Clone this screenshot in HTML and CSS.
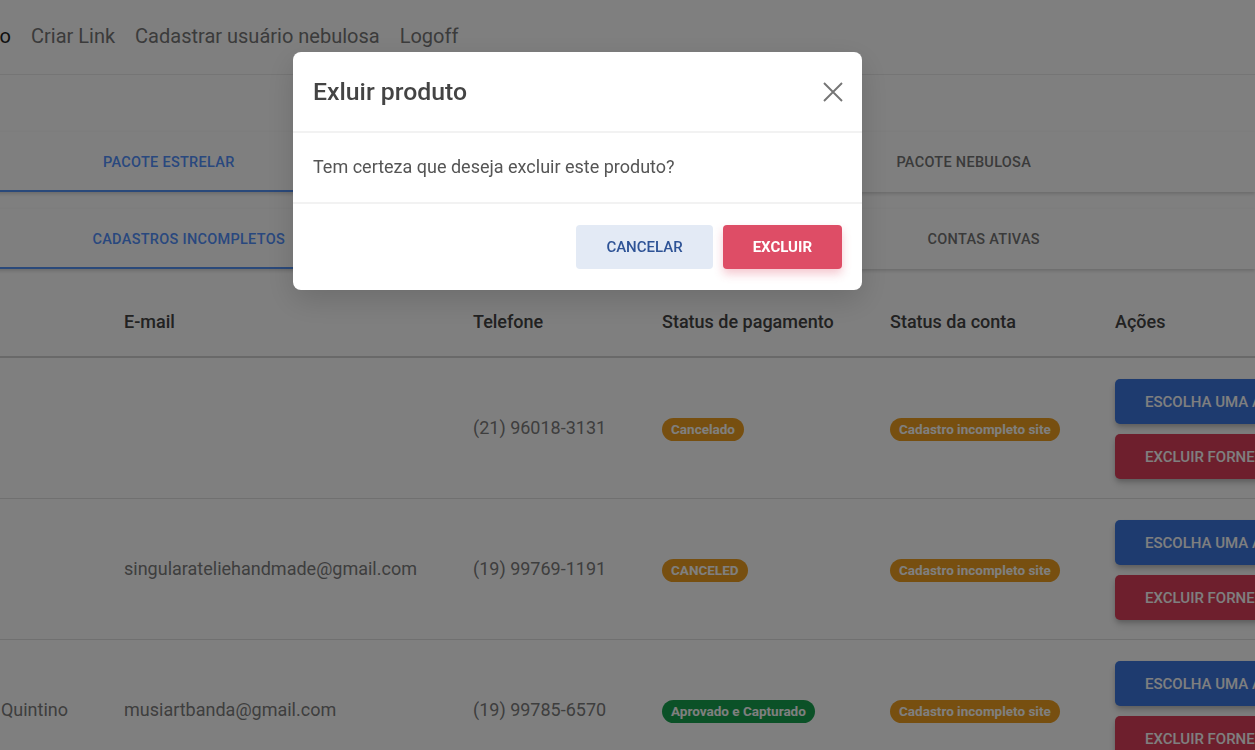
FILE: index.html
```html
<!DOCTYPE html>
<html lang="pt-BR">
<head>
<meta charset="utf-8">
<title>Exluir produto</title>
<link rel="stylesheet" href="styles.css">
</head>
<body>
<div class="page">
  <nav class="topnav">
    <div class="nav-cut"><a class="nav-link current">Produto</a></div>
    <a class="nav-link">Criar Link</a>
    <a class="nav-link">Cadastrar usuário nebulosa</a>
    <a class="nav-link">Logoff</a>
  </nav>

  <div class="tabs tabs-pack">
    <div class="tab active">Pacote Estrelar</div>
    <div class="tab">Pacote Galáxia</div>
    <div class="tab">Pacote Nebulosa</div>
    <div class="tab">Pacote Cometa</div>
  </div>

  <div class="tabs tabs-status">
    <div class="tab active">Cadastros incompletos</div>
    <div class="tab">Pagamentos pendentes</div>
    <div class="tab">Contas ativas</div>
    <div class="tab">Contas inativas</div>
  </div>

  <div class="table">
    <div class="row head">
      <div class="cell"><div class="name-cut">Nome</div></div>
      <div class="cell">E-mail</div>
      <div class="cell">Telefone</div>
      <div class="cell">Status de pagamento</div>
      <div class="cell">Status da conta</div>
      <div class="cell">Ações</div>
    </div>

    <div class="row">
      <div class="cell"><div class="name-cut"></div></div>
      <div class="cell text"></div>
      <div class="cell text">(21) 96018-3131</div>
      <div class="cell"><span class="badge warn">Cancelado</span></div>
      <div class="cell"><span class="badge warn">Cadastro incompleto site</span></div>
      <div class="cell actions">
        <button class="btn btn-blue">Escolha uma ação</button>
        <button class="btn btn-red">Excluir fornecedor</button>
      </div>
    </div>

    <div class="row">
      <div class="cell"><div class="name-cut"></div></div>
      <div class="cell text">singularateliehandmade@gmail.com</div>
      <div class="cell text">(19) 99769-1191</div>
      <div class="cell"><span class="badge warn">CANCELED</span></div>
      <div class="cell"><span class="badge warn">Cadastro incompleto site</span></div>
      <div class="cell actions">
        <button class="btn btn-blue">Escolha uma ação</button>
        <button class="btn btn-red">Excluir fornecedor</button>
      </div>
    </div>

    <div class="row">
      <div class="cell text"><div class="name-cut">Juliana Quintino</div></div>
      <div class="cell text">musiartbanda@gmail.com</div>
      <div class="cell text">(19) 99785-6570</div>
      <div class="cell"><span class="badge ok">Aprovado e Capturado</span></div>
      <div class="cell"><span class="badge warn">Cadastro incompleto site</span></div>
      <div class="cell actions">
        <button class="btn btn-blue">Escolha uma ação</button>
        <button class="btn btn-red">Excluir fornecedor</button>
      </div>
    </div>
  </div>
</div>

<div class="overlay">
  <div class="modal" role="dialog" aria-labelledby="modal-title">
    <div class="modal-header">
      <h2 class="modal-title" id="modal-title">Exluir produto</h2>
      <button class="close" aria-label="Fechar">
        <svg width="20" height="20" viewBox="0 0 20 20"><path d="M1 1L19 19M19 1L1 19" stroke="#757575" stroke-width="1.9" fill="none"/></svg>
      </button>
    </div>
    <div class="modal-body">Tem certeza que deseja excluir este produto?</div>
    <div class="modal-footer">
      <button class="mbtn mbtn-cancel">Cancelar</button>
      <button class="mbtn mbtn-delete">Excluir</button>
    </div>
  </div>
</div>
</body>
</html>
```

FILE: styles.css
```css
* { box-sizing: border-box; }

html, body {
  margin: 0;
  height: 100%;
  overflow: hidden;
  background: #fff;
  font-family: Roboto, "Liberation Sans", Arial, sans-serif;
}

.page {
  width: 100%;
  overflow: hidden;
  height: 750px;
}

/* top navigation */
.topnav {
  height: 75px;
  display: flex;
  align-items: center;
  gap: 20px;
  padding-bottom: 3px;
  border-bottom: 1px solid #ebebeb;
  font-size: 20px;
  white-space: nowrap;
}

.nav-cut {
  width: 11px;
  flex: none;
  display: flex;
  justify-content: flex-end;
}

.nav-link {
  color: #777;
  text-decoration: none;
}

.nav-link.current { color: #222; }

/* tabs */
.tabs {
  height: 60px;
  background: #fff;
  display: grid;
  grid-template-columns: repeat(4, 397.5px);
  box-shadow: 0 2px 3px rgba(0, 0, 0, 0.12), 0 1px 6px rgba(0, 0, 0, 0.06);
}

.tabs-pack {
  margin-top: 57px;
  margin-left: -30px;
}

.tabs-status {
  margin-top: 17px;
  margin-left: -10px;
}

.tab {
  display: flex;
  align-items: center;
  justify-content: center;
  font-size: 14.5px;
  font-weight: 500;
  letter-spacing: 0.02em;
  text-transform: uppercase;
  color: #757575;
  white-space: nowrap;
}

.tab.active {
  color: #5290fc;
  box-shadow: inset 0 -2px 0 #5592f5;
}

/* table */
.table {
  margin-top: 17px;
}

.row {
  display: grid;
  grid-template-columns: 124px 349px 189px 228px 225px 300px;
  align-items: center;
  font-size: 18px;
  color: #7c7c7c;
  padding: 21px 0 19px;
  border-bottom: 1px solid #e0e0e0;
  white-space: nowrap;
}

.row .text {
  padding-bottom: 3px;
}

.row.head {
  height: 72px;
  padding: 0;
  border-bottom: 2px solid #d3d3d3;
  font-weight: 500;
  color: #444;
}

.name-cut {
  width: 68px;
  display: flex;
  justify-content: flex-end;
  white-space: nowrap;
}

.row.head .name-cut { visibility: hidden; }

.badge {
  display: inline-block;
  height: 23px;
  line-height: 23px;
  padding: 0 9px;
  border-radius: 12px;
  font-size: 13.5px;
  font-weight: 700;
  color: #fff;
}

.badge.warn { background: #ef9f20; }
.badge.ok { background: #17a34e; }

.actions {
  display: flex;
  flex-direction: column;
  align-items: flex-start;
  gap: 10px;
}

.btn {
  height: 45px;
  border: 0;
  border-radius: 5px;
  padding: 0 30px;
  font-family: inherit;
  font-size: 15px;
  font-weight: 500;
  text-transform: uppercase;
  color: #fff;
  white-space: nowrap;
  box-shadow: 0 3px 5px -1px rgba(0, 0, 0, 0.2), 0 5px 8px rgba(0, 0, 0, 0.12);
}

.btn-blue { background: #3c77df; }
.btn-red { background: #dc3f5b; }

/* modal */
.overlay {
  position: fixed;
  inset: 0;
  background: rgba(0, 0, 0, 0.5);
}

.modal {
  margin: 52px 0 0 293px;
  width: 569px;
  background: #fff;
  border-radius: 8px;
  overflow: hidden;
  box-shadow: 0 10px 30px rgba(0, 0, 0, 0.15);
}

.modal-header {
  height: 81px;
  padding: 0 19px 0 20px;
  display: flex;
  align-items: center;
  justify-content: space-between;
  border-bottom: 2px solid #f2f2f2;
}

.modal-title {
  margin: 0;
  font-size: 24.8px;
  font-weight: 500;
  color: #444;
}

.close {
  width: 20px;
  height: 20px;
  padding: 0;
  border: 0;
  background: none;
  display: flex;
}

.modal-body {
  height: 71px;
  padding: 0 20px 2px;
  display: flex;
  align-items: center;
  font-size: 18px;
  color: #555;
  border-bottom: 2px solid #f2f2f2;
}

.modal-footer {
  padding: 21px 20px;
  display: flex;
  justify-content: flex-end;
  gap: 10px;
}

.mbtn {
  height: 44px;
  padding: 0 30px;
  border: 0;
  border-radius: 4px;
  font-family: inherit;
  font-size: 15px;
  font-weight: 500;
  text-transform: uppercase;
}

.mbtn-cancel {
  background: #e3eaf5;
  color: #2e5396;
}

.mbtn-delete {
  background: #de4d66;
  color: #fff;
  font-weight: 700;
  box-shadow: 0 5px 10px rgba(222, 77, 102, 0.3);
}
```
